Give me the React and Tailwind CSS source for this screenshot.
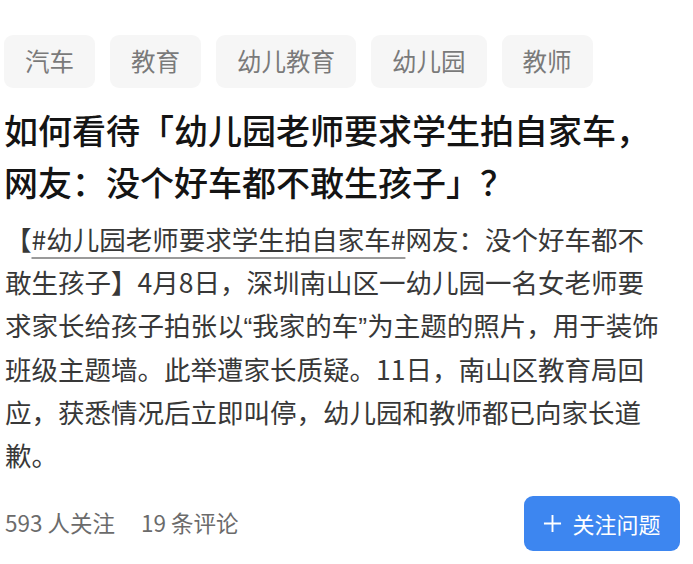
import React from "react";

const font = { fontFamily: '"Noto Sans CJK SC", "Noto Sans", sans-serif' };

const tags = ["汽车", "教育", "幼儿教育", "幼儿园", "教师"];

export default function App() {
  return (
    <div
      className="w-[693px] h-[564px] bg-white overflow-hidden font-['Noto_Sans_CJK_SC',sans-serif]"
      style={font}
    >
      <div className="flex gap-[15px] pl-[4px] pt-[35px]">
        {tags.map((t) => (
          <div
            key={t}
            className="h-[53px] px-[21px] flex items-center rounded-[9px] bg-[#f6f6f6] text-[#7a7a7a] text-[24.5px] leading-none"
          >
            {t}
          </div>
        ))}
      </div>

      <div className="mt-[16px] pl-[4px] text-[34px] leading-[52px] font-medium text-[#141414] whitespace-nowrap">
        <div>如何看待「幼儿园老师要求学生拍自家车，</div>
        <div>网友：没个好车都不敢生孩子」？</div>
      </div>

      <div className="mt-[10px] pl-[5px] text-[26.5px] leading-[42.8px] text-[#383838] whitespace-nowrap">
        <div>
          【
          <span className="underline decoration-[#9a9a9a] decoration-[1.5px] underline-offset-[7px]">
            #幼儿园老师要求学生拍自家车#
          </span>
          网友：没个好车都不
        </div>
        <div>敢生孩子】4月8日，深圳南山区一幼儿园一名女老师要</div>
        <div>
          求家长给孩子拍张以
          <span className="font-['Liberation_Sans',sans-serif]">“</span>
          我家的车
          <span className="font-['Liberation_Sans',sans-serif]">”</span>
          为主题的照片，用于装饰
        </div>
        <div>班级主题墙。此举遭家长质疑。11日，南山区教育局回</div>
        <div>应，获悉情况后立即叫停，幼儿园和教师都已向家长道</div>
        <div>歉。</div>
      </div>

      <div className="mt-[19px] flex items-center justify-between pl-[5px] pr-[13px]">
        <div className="flex items-center gap-[26px] text-[22.5px] text-[#6b6b6b]">
          <span>593 人关注</span>
          <span>19 条评论</span>
        </div>
        <div className="w-[156px] h-[55px] rounded-[9px] bg-[#3d86f0] flex items-center justify-center gap-[10px] text-white text-[22px]">
          <svg width="19" height="19" viewBox="0 0 20 20" fill="none">
            <path d="M10 1v18M1 10h18" stroke="white" strokeWidth="2" />
          </svg>
          <span>关注问题</span>
        </div>
      </div>
    </div>
  );
}
